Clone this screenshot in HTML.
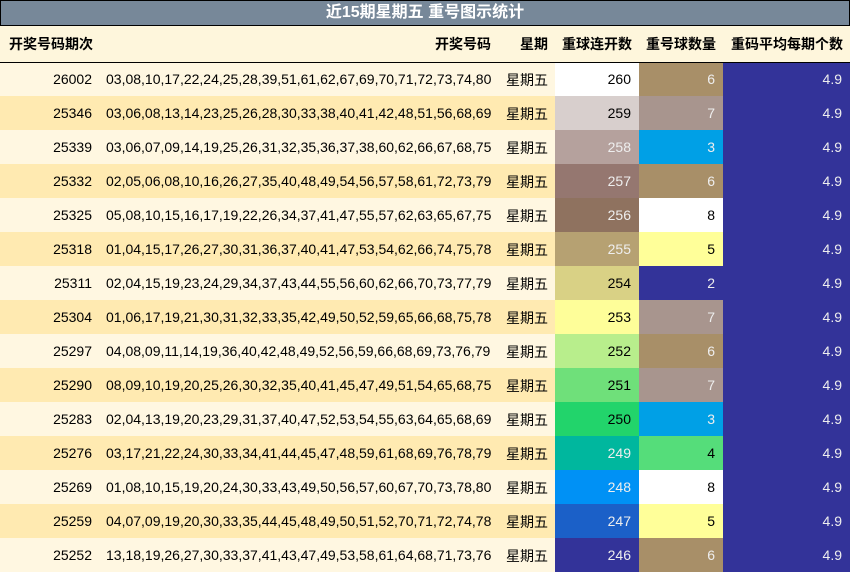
<!DOCTYPE html>
<html><head><meta charset="utf-8"><style>
*{margin:0;padding:0;box-sizing:border-box}
body{width:850px;height:573px;background:#fff;font-family:"Liberation Sans","Noto Sans CJK SC",sans-serif;font-size:14px;color:#000;overflow:hidden}
.title{height:26px;background:#778899;border:1px solid #000;color:#fff;font-weight:bold;font-size:16px;text-align:center;line-height:24px}
table{border-collapse:collapse;table-layout:fixed;width:850px}
td{height:34px;padding:0 8px 0 6px;white-space:nowrap;overflow:hidden}
tr.h td{height:36px;background:#fef6dc;font-weight:bold;text-align:right;border-bottom:1px solid #000;padding:0 7px 0 6px}
tr.h td.c1{text-align:left;padding-left:9px}
tr.a td.b{background:#fff7e1}
tr.b td.b{background:#ffeab1}
td.d{padding-left:8px;padding-top:2px}
.r{text-align:right}
.c2{text-align:left}
.w{color:#eee}
</style></head><body>
<div class="title">近15期星期五 重号图示统计</div>
<table>
<colgroup><col style="width:100px"><col style="width:398px"><col style="width:57px"><col style="width:84px"><col style="width:84px"><col style="width:127px"></colgroup>
<tr class="h"><td class="c1">开奖号码期次</td><td>开奖号码</td><td>星期</td><td>重球连开数</td><td>重号球数量</td><td>重码平均每期个数</td></tr>
<tr class="a"><td class="b r">26002</td><td class="b c2">03,08,10,17,22,24,25,28,39,51,61,62,67,69,70,71,72,73,74,80</td><td class="b d">星期五</td><td class="r" style="background:#fff">260</td><td class="r w" style="background:#a88f68">6</td><td class="r w" style="background:#333399">4.9</td></tr>
<tr class="b"><td class="b r">25346</td><td class="b c2">03,06,08,13,14,23,25,26,28,30,33,38,40,41,42,48,51,56,68,69</td><td class="b d">星期五</td><td class="r" style="background:#d8cfcd">259</td><td class="r w" style="background:#a8958e">7</td><td class="r w" style="background:#333399">4.9</td></tr>
<tr class="a"><td class="b r">25339</td><td class="b c2">03,06,07,09,14,19,25,26,31,32,35,36,37,38,60,62,66,67,68,75</td><td class="b d">星期五</td><td class="r w" style="background:#b5a19d">258</td><td class="r w" style="background:#00a0e6">3</td><td class="r w" style="background:#333399">4.9</td></tr>
<tr class="b"><td class="b r">25332</td><td class="b c2">02,05,06,08,10,16,26,27,35,40,48,49,54,56,57,58,61,72,73,79</td><td class="b d">星期五</td><td class="r w" style="background:#957770">257</td><td class="r w" style="background:#a88f68">6</td><td class="r w" style="background:#333399">4.9</td></tr>
<tr class="a"><td class="b r">25325</td><td class="b c2">05,08,10,15,16,17,19,22,26,34,37,41,47,55,57,62,63,65,67,75</td><td class="b d">星期五</td><td class="r w" style="background:#8f725f">256</td><td class="r" style="background:#fff">8</td><td class="r w" style="background:#333399">4.9</td></tr>
<tr class="b"><td class="b r">25318</td><td class="b c2">01,04,15,17,26,27,30,31,36,37,40,41,47,53,54,62,66,74,75,78</td><td class="b d">星期五</td><td class="r w" style="background:#b6a172">255</td><td class="r" style="background:#ffff99">5</td><td class="r w" style="background:#333399">4.9</td></tr>
<tr class="a"><td class="b r">25311</td><td class="b c2">02,04,15,19,23,24,29,34,37,43,44,55,56,60,62,66,70,73,77,79</td><td class="b d">星期五</td><td class="r" style="background:#d9d185">254</td><td class="r w" style="background:#333399">2</td><td class="r w" style="background:#333399">4.9</td></tr>
<tr class="b"><td class="b r">25304</td><td class="b c2">01,06,17,19,21,30,31,32,33,35,42,49,50,52,59,65,66,68,75,78</td><td class="b d">星期五</td><td class="r" style="background:#fefe99">253</td><td class="r w" style="background:#a8958e">7</td><td class="r w" style="background:#333399">4.9</td></tr>
<tr class="a"><td class="b r">25297</td><td class="b c2">04,08,09,11,14,19,36,40,42,48,49,52,56,59,66,68,69,73,76,79</td><td class="b d">星期五</td><td class="r" style="background:#b8ee8c">252</td><td class="r w" style="background:#a88f68">6</td><td class="r w" style="background:#333399">4.9</td></tr>
<tr class="b"><td class="b r">25290</td><td class="b c2">08,09,10,19,20,25,26,30,32,35,40,41,45,47,49,51,54,65,68,75</td><td class="b d">星期五</td><td class="r" style="background:#6fe07a">251</td><td class="r w" style="background:#a8958e">7</td><td class="r w" style="background:#333399">4.9</td></tr>
<tr class="a"><td class="b r">25283</td><td class="b c2">02,04,13,19,20,23,29,31,37,40,47,52,53,54,55,63,64,65,68,69</td><td class="b d">星期五</td><td class="r" style="background:#22d46b">250</td><td class="r w" style="background:#00a0e6">3</td><td class="r w" style="background:#333399">4.9</td></tr>
<tr class="b"><td class="b r">25276</td><td class="b c2">03,17,21,22,24,30,33,34,41,44,45,47,48,59,61,68,69,76,78,79</td><td class="b d">星期五</td><td class="r w" style="background:#00b79e">249</td><td class="r" style="background:#55dd7a">4</td><td class="r w" style="background:#333399">4.9</td></tr>
<tr class="a"><td class="b r">25269</td><td class="b c2">01,08,10,15,19,20,24,30,33,43,49,50,56,57,60,67,70,73,78,80</td><td class="b d">星期五</td><td class="r w" style="background:#0091f5">248</td><td class="r" style="background:#fff">8</td><td class="r w" style="background:#333399">4.9</td></tr>
<tr class="b"><td class="b r">25259</td><td class="b c2">04,07,09,19,20,30,33,35,44,45,48,49,50,51,52,70,71,72,74,78</td><td class="b d">星期五</td><td class="r w" style="background:#1b60c8">247</td><td class="r" style="background:#ffff99">5</td><td class="r w" style="background:#333399">4.9</td></tr>
<tr class="a"><td class="b r">25252</td><td class="b c2">13,18,19,26,27,30,33,37,41,43,47,49,53,58,61,64,68,71,73,76</td><td class="b d">星期五</td><td class="r w" style="background:#333399">246</td><td class="r w" style="background:#a88f68">6</td><td class="r w" style="background:#333399">4.9</td></tr>
</table>
</body></html>
